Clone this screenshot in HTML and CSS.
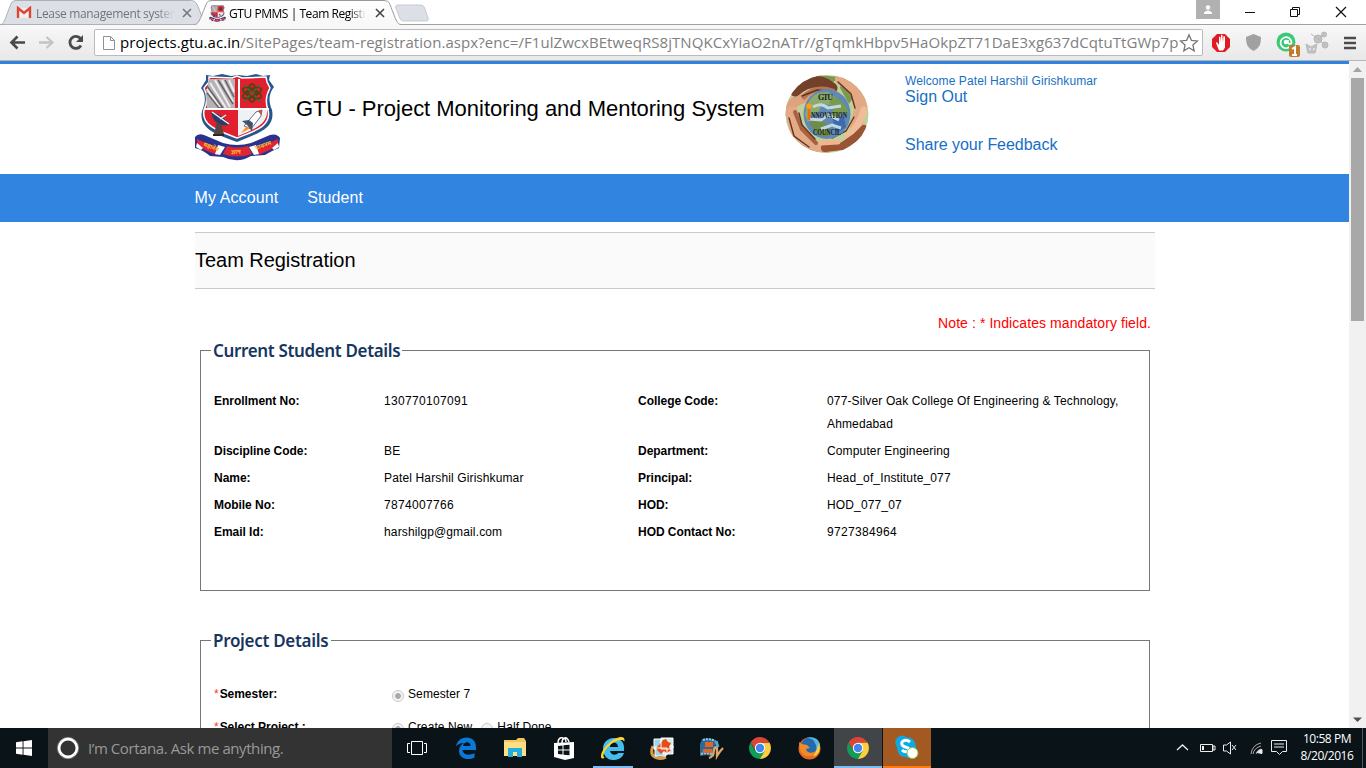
FILE: index.html
```html
<!DOCTYPE html>
<html lang="en">
<head>
<meta charset="utf-8">
<title>GTU PMMS | Team Registration</title>
<link rel="stylesheet" href="styles.css">
</head>
<body>
<svg class="defs" width="0" height="0">
  <defs>
    <symbol id="crest" viewBox="0 0 86 88">
      <path d="M12 2l7 1 9-2 9 2 7-1 9 1 9-2 7 2 7-1-1 5 5 7c-5 6-6 14-2 23 4 19-16 24-35 32C23 62 4 56 8 38c4-9 4-17-1-23l5-8z" fill="#27568f"/>
      <path d="M15 4l23 1 5-2 5 2 24-1 1 5 3 6c-4 7-5 14-2 22 4 16-13 21-31 28C25 58 7 53 10 37c4-8 3-16 0-22l5-6z" fill="#e21f2e" stroke="#fff" stroke-width="1.500"/>
      <path d="M15 6h26v29H13c0-8-2-14 0-20z" fill="#b7b3b5"/>
      <path d="M16 10l16 25M21 7l15 27M28 7l11 22M13 16l13 19M35 7l5 12" stroke="#eee" stroke-width="2"/>
      <path d="M13 13l16 22h-4L13 20M24 7l15 24M31 7l9 17" stroke="#67636b" stroke-width="1.500" fill="none"/>
      <path d="M45 35V6M10 36h65" stroke="#fff" stroke-width="2"/>
      <path d="M44 37h29c1 14-12 19-29 26z" fill="#eff2f5"/>
      <g fill="none" stroke="#554112" stroke-width="1.800"><circle cx="58" cy="20" r="4" fill="#a92b21"/><ellipse cx="58" cy="20" rx="10" ry="4" transform="rotate(25 58 20)"/><ellipse cx="58" cy="20" rx="10" ry="4" transform="rotate(-25 58 20)"/><ellipse cx="58" cy="20" rx="4" ry="9"/><path d="M50 12l16 16m0-16L50 28" stroke="#347044" stroke-dasharray="3 2"/></g>
      <path d="M17 39c7 1 14 6 18 13-8 2-16-2-18-13z" fill="#263e69"/><path d="M18 39l17 12M26 46l6-4" stroke="#eff2f5" stroke-width="1.500"/><path d="M23 49l-3 12h10l-3-10z" fill="#57433f"/><path d="M19 62h11" stroke="#2c2430" stroke-width="2"/>
      <path d="M50 53l12-14 6-2-1 6-10 13z" fill="#fff" stroke="#617386"/><path d="M55 47l-7 1 5 4 5 6 1-8" fill="#41536b"/><path d="M53 53l-6 7 8-4" fill="#ff8d19"/><path d="M64 38l4-1-1 5z" fill="#d7492b"/>
      <path d="M1 64q3-4 9-2l19 8q14 4 28 0l19-8q7-2 10 3l-1 10q-8 3-14 7l-14 1q-13 8-28 1l-13-1Q9 77 1 75z" fill="#29338d"/>
      <path d="M3 66l23 10-3 6-12-5-8-5zM33 73q10 3 21 0l4 8q-15 5-29 0zM84 66L61 76l3 6 12-5 8-5z" fill="#df2633"/>
      <path d="M24 72l7 2-5 8-5-1zM62 72l-7 2 5 8 5-1zM3 70l6 5-2 2-5-3zM84 70l-6 5 2 2 5-3z" fill="#fff"/>
      <g class="crest-label"><text x="9" y="73" transform="rotate(20 9 73)">महादेव</text><text x="37" y="81">ज्ञान</text><text x="62" y="77" transform="rotate(-20 62 77)">पावनम</text></g>
    </symbol>
    <symbol id="chrome" viewBox="0 0 24 24"><path d="M12 6.500h9.500A11 11 0 0 1 12 23z" fill="#ffcd40"/><path d="M12 6.500h9.500A11 11 0 0 0 2.500 6.500l5 8z" fill="#db4437"/><path d="M7.200 14.700L2.500 6.500A11 11 0 0 0 12 23l4.800-8.200z" fill="#109d58"/><circle cx="12" cy="12" r="5.200" fill="#fff"/><circle cx="12" cy="12" r="4.200" fill="#4285f4"/></symbol>
  </defs>
</svg>
<div class="screen">
  <header class="tabstrip">
    <svg class="tab-shapes" width="440" height="25"><defs><linearGradient id="tg" x2="0" y2="1"><stop stop-color="#fff"/><stop offset="1" stop-color="#f7f7f7"/></linearGradient></defs><path d="M0 24.500H440" stroke="#a1a1a1"/><path d="M1 24.500C5 23 5 18 11 4c1-3 3-3.500 6-3.500H190c4 0 6 1 8 6l7 18z" fill="#dce0e6" stroke="#adb1b6"/><path d="M398 5h22c3 0 4 1 5 4l3 9c1 2 0 3-2 3h-22c-3 0-4-2-5-5l-3-8c-1-2 0-3 2-3z" fill="#dce0e6" stroke="#c7cbd0"/><path d="M194 24.500c4 0 5-2 12-20 1-3 3-4 6-4H383c4 0 6 1 7 4 7 18 7 20 12 20V26H194z" fill="url(#tg)"/><path d="M194 24.500c4 0 5-2 12-20 1-3 3-4 6-4H383c4 0 6 1 7 4 7 18 7 20 12 20" fill="none" stroke="#999"/></svg>
    <div class="tab tab-mail"><svg width="16" height="14" viewBox="0 0 16 14"><path d="M2 2h12v10H2z" fill="#f3eeee"/><path d="M2 12V2l6 5 6-5v10" fill="none" stroke="#dc4639" stroke-width="2.400"/></svg><span class="tab-title">Lease management system</span><svg width="10" height="10" viewBox="0 0 10 10"><path d="M1 1l8 8M9 1L1 9" stroke="#777" stroke-width="1.600"/></svg></div>
    <div class="tab tab-active"><svg width="17" height="17"><use href="#crest"/></svg><span class="tab-title">GTU PMMS | Team Registr</span><svg width="10" height="10" viewBox="0 0 10 10"><path d="M1 1l8 8M9 1L1 9" stroke="#444" stroke-width="1.600"/></svg></div>
    <div class="window-controls">
      <span class="profile"><svg width="10" height="10"><circle cx="5" cy="2.500" r="2.200" fill="#fff"/><path d="M1 9V7.500Q5 3.500 9 7.500V9z" fill="#fff"/></svg></span>
      <svg class="window-buttons" width="146" height="25"><path d="M25 12.500h10" stroke="#111"/><path d="M70.500 9.500h7v7h-7zM72.500 9V7.500h7v7H78" fill="none" stroke="#111"/><path d="M116 7l10 10m0-10l-10 10" stroke="#111" stroke-width="1.200"/></svg>
    </div>
  </header>
  <div class="toolbar">
    <svg class="nav-icons" width="94" height="36" fill="none"><path d="M25 17.500H12m5.500-6L11.500 17.500l6 6" stroke="#4a4a4a" stroke-width="2.700"/><path d="M39 17.500h13m-5.500-5.500 6 5.500-6 5.500" stroke="#c4c4c4" stroke-width="2.300"/><path d="M80.500 13.500a6 6 0 1 0 .5 7" stroke="#4a4a4a" stroke-width="2.800"/><path d="M83 10v7h-7z" fill="#4a4a4a"/></svg>
    <div class="address"><svg width="13" height="16"><path d="M1.500 1.500h7l4 4v9h-11zM8.500 1.500v4h4" fill="#fff" stroke="#909090"/></svg><span class="url"><b>projects.gtu.ac.in</b>/SitePages/team-registration.aspx?enc=/F1ulZwcxBEtweqRS8jTNQKCxYiaO2nATr//gTqmkHbpv5HaOkpZT71DaE3xg637dCqtuTtGWp7p</span><svg class="star" width="20" height="20"><path d="M10 1.800l2.400 5.500 6 .6-4.500 4 1.300 5.900-5.200-3.100-5.200 3.100 1.300-5.900-4.500-4 6-.6z" fill="#fff" stroke="#777" stroke-width="1.300"/></svg></div>
    <svg class="extensions" width="163" height="36"><path d="M14 9h8l5 5v8l-5 5h-8l-5-5v-8z" fill="#df1c24"/><path d="M13 18l1-1 2 3v-8l1.300-.5L18 17v-7l1.300-.5L20 17l.5-6 1.500.5v11l-2 3h-4z" fill="#fff"/><path d="M43 12l7.500-3L58 12c0 8-2 11-7.500 14C45 23 43 20 43 12z" fill="#a1a1a1"/><circle cx="83" cy="17" r="9.500" fill="#3bc978"/><path d="M86.500 22A5.500 5.500 0 1 1 88.500 17q0 2-2 2t-1.500-4" fill="none" stroke="#fff" stroke-width="1.700"/><circle cx="83" cy="17" r="2.200" fill="#fff"/><rect x="86" y="20" width="11" height="12" rx="2" fill="#c27a2c"/><path d="M89 24l3-2v8m-3 0h5" fill="none" stroke="#fff" stroke-width="2"/><g fill="#c2c2c2" stroke="#b7b7b7"><circle cx="115" cy="14" r="4"/><circle cx="121" cy="9.500" r="2.500"/><circle cx="122" cy="20" r="3"/><path d="M115 14l6-4m-6 4 7 6M103 19l5 3 6-3-2 9h-7zM108 9l6 4"/></g><path d="M106 24h2m2 0h2" stroke="#fff"/><path d="M141 13h12M141 18h12M141 23h12" stroke="#4c4c4c" stroke-width="2.700"/></svg>
  </div>
  <div class="viewport">
    <main class="page">
      <div class="masthead">
        <svg class="crest" width="86" height="88"><use href="#crest"/></svg>
        <h1>GTU - Project Monitoring and Mentoring System</h1>
        <svg class="council" width="84" height="80" viewBox="0 0 84 80"><defs><clipPath id="oval"><ellipse cx="42" cy="40" rx="41.500" ry="39"/></clipPath></defs>
          <g clip-path="url(#oval)"><path d="M0 0h84v80H0z" fill="#bfd09a"/><path d="M6 14L31 1l24 2-16 12zM57 0l15 18-8 12-9-16zM10 62l12 16 12 2-9-15z" fill="#7d984f"/>
            <g fill="none" stroke-linecap="round"><path d="M4 39Q5 27 19 24l9-4" stroke="#dfa27e" stroke-width="10"/><path d="M10 17Q27 3 41 10l6 4" stroke="#74402a" stroke-width="11"/><path d="M19 23Q30 11 48 17" stroke="#b97453" stroke-width="5"/><path d="M56 5Q74 15 76 33l-5 20" stroke="#e4a883" stroke-width="12"/><path d="M79 36q-5 17-16 26" stroke="#f0bd9b" stroke-width="7"/><path d="M7 38l4 21 12 13 16 3" stroke="#e2aa87" stroke-width="12"/><path d="M10 38l7 17 14 14" stroke="#a9613f" stroke-width="4"/><path d="M40 74l18-2 13-9 8-8" stroke="#9a5433" stroke-width="8"/><path d="M36 69l17-1" stroke="#efb58d" stroke-width="5"/><path d="M4 44l5 18 15 11M14 39l3 12 13 14M17 22l15-6 14 1M53 8l13 12 4 14M69 43l-8 14-14 7" stroke="#633221" stroke-width="1.400"/></g>
            <ellipse cx="42" cy="40" rx="23.500" ry="25" fill="#6089b6"/><path d="M20 41q2-17 13-22l10-1 9 7-6 6-9-1-4 9-8 2-2 8z" fill="#8cab6b"/><path d="M50 22l10 9 4 9-8-2-4 8-6-3 2-7-4-8z" fill="#789b51"/><path d="M24 48l12-3 6 6 4 10-7 2q-9-2-15-15z" fill="#6f8c4a"/><path d="M47 44l12-1 2 10-9 6z" fill="#3e6bb0"/><path d="M28 33q8-5 15 1l13-2M24 45l12 1 7-5 11 5M36 55l11-4 9 3" stroke="#c2d8e1" stroke-width="3" fill="none"/></g>
          <circle cx="24" cy="32" r="2.800" fill="#ff9d18"/><path d="M24 35v11" stroke="#f06a13" stroke-width="2.500"/><g class="council-label"><text x="33" y="26" textLength="15">GTU</text><text x="26" y="44" textLength="36" lengthAdjust="spacingAndGlyphs">NNOVATION</text><text x="28" y="61" textLength="28" lengthAdjust="spacingAndGlyphs">COUNCIL</text></g></svg>
        <div class="account"><small>Welcome Patel Harshil Girishkumar</small><a>Sign Out</a><a class="feedback">Share your Feedback</a></div>
      </div>
      <nav class="main-nav"><a class="my-account">My Account</a><a>Student</a></nav>
      <div class="content">
        <h2>Team Registration</h2>
        <p class="note">Note : * Indicates mandatory field.</p>
        <section class="panel student"><h3><span class="h-student">Current Student Details</span></h3>
          <div class="details">
            <b>Enrollment No:</b><span class="num">130770107091</span><b>College Code:</b><span class="college">077-Silver Oak College Of Engineering &amp; Technology, Ahmedabad</span>
            <b>Discipline Code:</b><span>BE</span><b>Department:</b><span>Computer Engineering</span>
            <b>Name:</b><span>Patel Harshil Girishkumar</span><b>Principal:</b><span>Head_of_Institute_077</span>
            <b>Mobile No:</b><span class="num">7874007766</span><b>HOD:</b><span>HOD_077_07</span>
            <b>Email Id:</b><span>harshilgp@gmail.com</span><b>HOD Contact No:</b><span class="num">9727384964</span>
          </div>
        </section>
        <section class="panel project"><h3><span class="h-project">Project Details</span></h3>
          <div class="choice"><b><i>*</i>Semester:</b><span><em class="radio checked"></em>Semester 7</span></div>
          <div class="choice"><b><i>*</i>Select Project :</b><span><em class="radio checked"></em>Create New</span><span class="half"><em class="radio"></em>Half Done</span></div>
        </section>
      </div>
    </main>
    <aside class="scrollbar"><svg width="17" height="17"><path d="M4 11l4.500-5 4.500 5z" fill="#a3a3a3"/></svg><span class="thumb"></span><svg class="down" width="17" height="17"><path d="M4 6.500h9l-4.500 4.500z" fill="#505050"/></svg></aside>
  </div>
  <footer class="taskbar">
    <div class="start"><svg width="16" height="16"><path d="M0 2.200L6.600 1.300V7.500H0zM7.500 1.200L16 0v7.500H7.500zM0 8.500h6.600v6.300L0 13.800zM7.500 8.500H16V16l-8.500-1.200z" fill="#fff"/></svg></div>
    <div class="cortana"><svg width="24" height="24"><circle cx="12" cy="12" r="9" fill="none" stroke="#fff" stroke-width="2.800"/><circle cx="12" cy="12" r="10.700" fill="none" stroke="#999" stroke-width=".7"/></svg><span>I’m Cortana. Ask me anything.</span></div>
    <div class="apps">
      <div class="app"><svg width="24" height="24" fill="none" stroke="#fff"><path d="M6.500 5.500h11v13h-11zM5 7.500H2.500v9H5M19 7.500h2.500v9H19"/></svg></div>
      <div class="app"><svg width="24" height="24" viewBox="0 0 24 24"><path d="M2 10.500C3 5 7 1.500 12.500 1.500c6 0 9.500 4 9.500 9.500v3H8.500c.5 5 7 6 12 3v4.500c-7 3.500-15 1-15.500-6-.2-4 2-7 5-8.500-4 0-6.500 1.500-8 3.500zM9 10h7.500c0-5-6.500-5-7.500 0z" fill="#0879d8"/></svg></div>
      <div class="app"><svg width="24" height="24"><path d="M1 4h12l2-2h6l2 3v15H1z" fill="#efc75e"/><path d="M1 6h22v14H1z" fill="#ffdf83"/><path d="M5 12h14v9h-5v-5h-4v5H5z" fill="#22aee2"/></svg></div>
      <div class="app"><svg width="24" height="24"><path d="M2 7l20-1v16l-9 2-11-3z" fill="#fff"/><path d="M6 7c0-4 2-6 5-5 2 0 3 1 3 4M10 7c0-5 5-8 7-1" fill="none" stroke="#fff" stroke-width="1.500"/><path d="M6 10l4.500-.5v4H6zM11.500 9.300l6-.5v4.700h-6zM6 14.500h4.500v4L6 18zM11.500 14.500h6v4.800l-6-.6z" fill="#0b1419"/></svg></div>
      <div class="app running"><svg width="26" height="26"><path d="M3 14C3 7 8 3 14 3c7 0 11 5 10 13H10c1 5 7 4 8 2h6c-2 6-7 7-11 7C7 25 3 20 3 14zm7-2h8c0-6-8-6-8 0z" fill="#43bfee"/><path d="M4 23C-1 26 0 16 8 9 16 1 27-1 24 7c0-4-9-1-14 3C3 16 1 25 7 22" fill="#ffd22e"/></svg></div>
      <div class="app"><svg width="25" height="25"><path d="M3 10c-5 12 6 14 13 11" fill="none" stroke="#d99a42" stroke-width="3"/><path d="M4 3h11v10H4zM5 11h11v9H5z" fill="#9dd5e8" stroke="#fff"/><path d="M11 2h12v10H11zM13 10h10v8H13z" fill="#d7e9e6" stroke="#fff"/><path d="M6 12l4-4 3-4 3-1 2 3 3 1-2 4 2 3-4 3-3-2-3 3-3-3z" fill="#e64d18"/><path d="M11 3v10h11M5 12h12v7" fill="none" stroke="#fff"/></svg></div>
      <div class="app"><svg width="25" height="25"><path d="M3 3q7-2 14 1l-2 17Q9 18 1 20V8z" fill="#276b98"/><path d="M4 4q6-2 12 1M2 18q6-2 13 1" fill="none" stroke="#9ccbe0" stroke-width="2" stroke-dasharray="2 1"/><path d="M6 6h8v5H6zM4 13h9v4H4z" fill="#e96322"/><path d="M10 22c8-2 2-11 8-11v9q3-5 6-8" fill="none" stroke="#e0a464" stroke-width="2.300"/><path d="M17 5l2 6" stroke="#55a8cf" stroke-width="3"/></svg></div>
      <div class="app"><svg width="24" height="24"><use href="#chrome"/></svg></div>
      <div class="app"><svg width="25" height="25"><circle cx="12.500" cy="12.500" r="11" fill="#e76724"/><circle cx="13" cy="10" r="8.800" fill="#236bac"/><path d="M9 2q11-3 14 6 0 12-9 11 9-4 3-14-2-3-8-3" fill="#58b5dc"/><path d="M2 6l3 2 5 1 3 3-4 1c1 5 8 5 12 0 0 8-16 11-18 0z" fill="#f18b28"/><path d="M22 7q3 10-6 14 4-6 6-14" fill="#ffd23b"/></svg></div>
      <div class="app running selected"><svg width="24" height="24"><use href="#chrome"/></svg></div>
      <div class="app running skype"><svg width="26" height="26"><path d="M4 2q4-3 8 0 9 0 10 10 3 9-5 11-2 1-5-1Q3 22 3 12-1 6 4 2" fill="#0ba9e7"/><path d="M16 7C11 3 5 7 9 11l5 2c4 2-2 6-6 2" fill="none" stroke="#fff" stroke-width="3"/><circle cx="18.500" cy="18" r="5.500" fill="#fff" stroke="#87c53c"/></svg></div>
    </div>
    <div class="tray"><svg width="115" height="40" fill="none" stroke="#eee"><path d="M1 22l5.500-5 5.500 5" stroke-width="1.300"/><path d="M24.500 16.500h12v7h-12zM37 18h2v4h-2z"/><path d="M27 18v4" stroke-width="2"/><path d="M47.500 17h3l4-3v12l-4-3h-3zM56 17l4 5m0-5-4 5"/><path d="M75 26q1-9 10-11M77 26q1-6 8-8M80 26q1-4 5-5" stroke="#aaa"/><path d="M81 24.500q2-3 5-3v4z" fill="#eee"/><path d="M95.500 12.500h15v11h-4l-3 3-3-3h-5zM98 16h10M98 19h10"/></svg><div class="clock"><span>10:58 PM</span><span>8/20/2016</span></div><i class="show-desktop"></i></div>
  </footer>
</div>
</body>
</html>
```
FILE: styles.css
```css
* { box-sizing: border-box; }
body { margin: 0; background: #fff; font-family: "Liberation Sans", Arial, sans-serif; color: #000; }
h1, h2, h3, p { margin: 0; font-weight: 400; }
.defs { position: absolute; }
.crest-label { fill: #ffbc38; font: bold 6px "Noto Sans", sans-serif; }
.council-label { fill: #192318; font: bold 8px "Liberation Serif", serif; }
.screen { width: 1366px; height: 768px; display: flex; flex-direction: column; overflow: hidden; }
.tabstrip { position: relative; display: flex; height: 25px; border-bottom: 1px solid #a1a1a1; font: 12px "Open Sans", sans-serif; }
.tab-shapes { position: absolute; left: 0; top: 0; }
.tab { position: relative; display: flex; align-items: center; height: 26px; }
.tab-mail { width: 193px; padding-left: 16px; color: #737477; }
.tab-active { padding-left: 16px; }
.tab-title { width: 138px; margin: 0 8px 0 4px; overflow: hidden; white-space: nowrap; letter-spacing: -.34px; -webkit-mask: linear-gradient(90deg, #000 88%, transparent); }
.tab-active .tab-title { width: 137px; margin: 0 9px 0 3px; letter-spacing: -.45px; }
.window-controls { display: flex; margin-left: auto; }
.profile { width: 24px; height: 19px; background: #b1b1b1; display: flex; align-items: center; justify-content: center; }
.toolbar { display: flex; align-items: center; height: 36px; flex: none; background: linear-gradient(#f8f8f8, #e8e8e8); border-bottom: 1px solid #b6b6b6; }
.address { width: 1109px; height: 27px; display: flex; align-items: center; padding: 0 3px 0 7px; background: #fff; border: 1px solid #bbb; border-radius: 2px; }
.url { width: 1061px; margin-left: 5px; overflow: hidden; white-space: nowrap; color: #808080; font: 15px/24px "Open Sans", sans-serif; letter-spacing: .06px; margin-top: -2px; }
.url b { color: #000; font-weight: 400; }
.star { flex: none; margin-left: -1px; }
.viewport { display: flex; height: 667px; flex: none; }
.page { width: 1349px; height: 667px; overflow: hidden; border-top: 3px solid #2f82df; }
.masthead { width: 960px; height: 110px; margin-left: 194px; display: flex; align-items: flex-start; }
.crest { margin-top: 9px; flex: none; }
h1 { width: 490px; padding: 32px 0 0 16px; font-size: 22px; line-height: 26px; letter-spacing: -.02px; white-space: nowrap; }
.council { flex: none; margin: 10px 0 0 15px; }
.account { display: flex; flex-direction: column; padding: 10px 0 0 36px; color: #176fc5; font-size: 16px; line-height: 18px; white-space: nowrap; }
.account small { font-size: 12px; line-height: 14px; letter-spacing: .09px; }
.feedback { margin-top: 30px; letter-spacing: -.03px; }
.main-nav { height: 48px; padding-left: 194.5px; display: flex; gap: 29px; background: #3184df; color: #fff; font-size: 16px; line-height: 47px; letter-spacing: .1px; }
.content { width: 960px; margin: 10px 0 0 195px; }
h2 { height: 57px; border: 1px solid #c9c9c9; border-width: 1px 0; background: #fafafa; font-size: 20px; line-height: 54px; letter-spacing: -.04px; }
.note { margin: 25px 4px 0 0; text-align: right; color: #f00; font-size: 14px; line-height: 18px; letter-spacing: .08px; }
.panel { width: 950px; margin-left: 5px; border: 1px solid #777; }
.student { height: 241px; margin-top: 18px; }
.project { height: 150px; margin-top: 49px; }
h3 { height: 22px; margin: -11px 0 0 10px; color: #17365f; font: 600 17px/22px "Noto Sans", sans-serif; letter-spacing: -.35px; white-space: nowrap; }
h3 span { background: #fff; padding: 0 2px; display: inline-block; }
.h-student { width: 191px; }
.h-project { width: 120px; letter-spacing: -.3px; }
.details { display: grid; grid-template-columns: 170px 254px 189px 310px; row-gap: 4px; margin: 28px 0 0 13px; font-size: 12px; line-height: 23px; letter-spacing: .14px; }
.num { letter-spacing: .33px; }
.details b, .choice b { letter-spacing: -.04px; }
.choice { display: flex; height: 33px; margin-left: 13px; font-size: 12px; line-height: 23px; letter-spacing: .1px; }
.project h3 + .choice { margin-top: 31px; }
.choice > b { width: 178px; }
.choice i { color: #f33; font-weight: 400; font-style: normal; margin-right: 1px; }
.choice span { display: flex; }
.radio { width: 12px; height: 12px; margin: 7px 4px 0 0; border: 1px solid #c9c9c9; border-radius: 50%; background: #f4f4f4; }
.checked { background: radial-gradient(circle, #aaa 0 2.5px, #f4f4f4 3.3px); }
.half { margin-left: 9px; }
.scrollbar { width: 17px; display: flex; flex-direction: column; align-items: center; background: #f1f1f1; }
.thumb { width: 13px; height: 243px; background: #a8a8a8; }
.down { margin-top: auto; }
.taskbar { height: 40px; flex: none; display: flex; background: #0a1318; color: #fff; }
.start { width: 48px; padding: 12px 16px; }
.cortana { width: 344px; display: flex; align-items: center; padding-left: 8px; background: #333; color: #999; font: 15px "Open Sans", sans-serif; }
.cortana span { margin-left: 8px; letter-spacing: -.42px; }
.apps { display: flex; gap: 1px; margin-left: 1px; }
.app { width: 48px; height: 40px; display: flex; align-items: center; justify-content: center; }
.running { background: linear-gradient(#7dbcf3, #7dbcf3) 4px 38px / 40px 2px no-repeat; }
.selected { background: #414548; box-shadow: inset 0 -2px #7dbcf3; }
.skype { background: #a35a22; box-shadow: inset 0 -2px #ff7a13; }
.tray { margin-left: auto; display: flex; }
.tray svg { margin-right: 1px; }
.clock { width: 70px; display: flex; flex-direction: column; align-items: center; padding-top: 2px; font: 12px/17px "Open Sans", sans-serif; letter-spacing: -.45px; }
.show-desktop { width: 4px; border-left: 1px solid #53595c; }
```
